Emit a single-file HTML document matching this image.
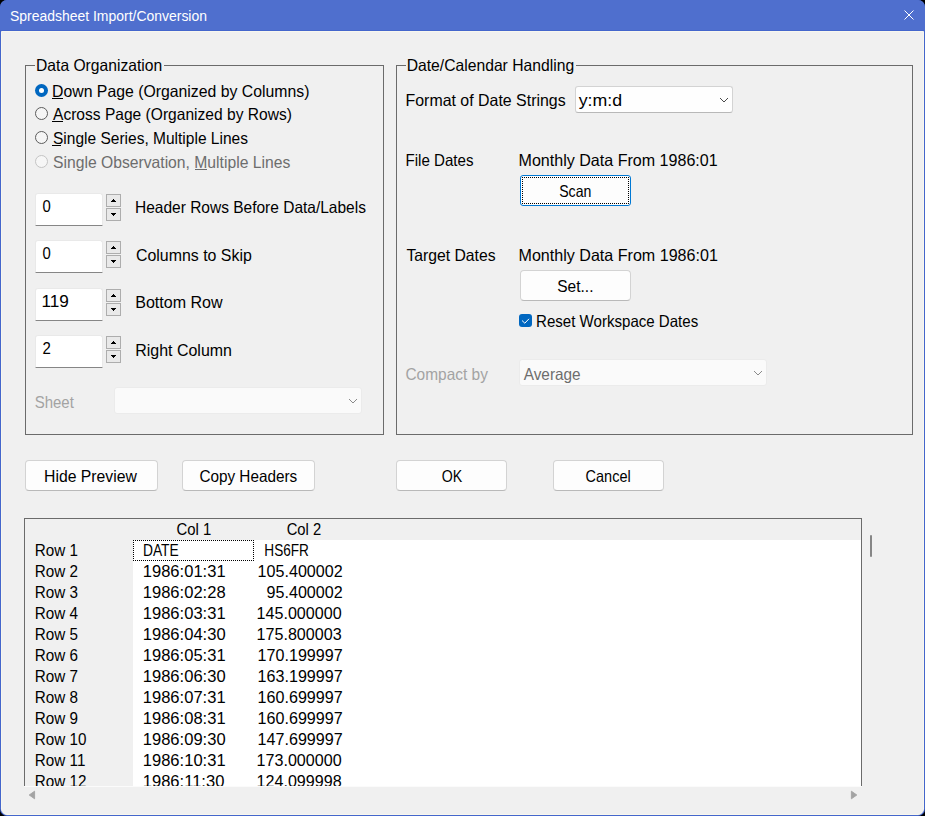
<!DOCTYPE html>
<html><head><meta charset="utf-8">
<style>
html,body{margin:0;padding:0;width:925px;height:816px;overflow:hidden;background:#000;}
*{box-sizing:border-box;}
.a{position:absolute;}
#win{position:absolute;left:0;top:0;width:925px;height:816px;border-radius:7px 7px 7px 7px;background:#4466cc;overflow:hidden;}
#title{position:absolute;left:0;top:0;width:925px;height:30px;background:#4f6fce;}
#client{position:absolute;left:1px;top:31px;width:923px;height:784px;background:#f0f0f0;border:1px solid #f8f7ee;border-radius:0 0 6px 6px;}
.grp{position:absolute;border:1px solid #6b6b6b;}
.gap{position:absolute;background:#f0f0f0;height:3px;}
.radio{position:absolute;width:13px;height:13px;border-radius:50%;border:1px solid #5c5c5c;background:#f5f5f5;}
.radio.on{border:none;background:#0067c0;}
.radio.on::after{content:"";position:absolute;left:4px;top:4px;width:5px;height:5px;border-radius:50%;background:#fff;}
.radio.dis{border-color:#c4c4c4;background:#f6f6f6;}
.edit{position:absolute;width:68px;height:33px;background:#fff;border:1px solid #e9e9e9;border-bottom:1px solid #868686;border-radius:3px 3px 0 0;}
.spin{position:absolute;width:15px;height:13px;border:1px solid #adadad;background:#e9e9e9;}
.combo{position:absolute;background:#fefefe;border:1px solid #d3d3d3;border-bottom-color:#b8b8b8;border-radius:3px;}
.combo.dis{background:#fafafa;border-color:#ebebeb;}
.btn{position:absolute;background:#fdfdfd;border:1px solid #d3d3d3;border-bottom-color:#b9b9b9;border-radius:4px;}
svg.ov{position:absolute;left:0;top:0;}
svg.ov text{font-family:"Liberation Sans",sans-serif;}
</style></head><body>
<div id="win">
  <div id="title"></div>
  <div id="client"></div>

  <!-- Left group -->
  <div class="grp" style="left:25px;top:65px;width:359px;height:370px;"></div>
  <div class="gap" style="left:35px;top:64px;width:129px;"></div>

  <div class="radio on" style="left:35px;top:84px;"></div>
  <div class="radio" style="left:35px;top:107px;"></div>
  <div class="radio" style="left:35px;top:131px;"></div>
  <div class="radio dis" style="left:35px;top:155px;"></div>

  <div class="edit" style="left:35px;top:193px;"></div>
  <div class="spin up" style="left:106px;top:194px;"></div>
  <div class="spin dn" style="left:106px;top:208px;"></div>
  <div class="edit" style="left:35px;top:240px;"></div>
  <div class="spin up" style="left:106px;top:241px;"></div>
  <div class="spin dn" style="left:106px;top:255px;"></div>
  <div class="edit" style="left:35px;top:288px;"></div>
  <div class="spin up" style="left:106px;top:289px;"></div>
  <div class="spin dn" style="left:106px;top:303px;"></div>
  <div class="edit" style="left:35px;top:335px;"></div>
  <div class="spin up" style="left:106px;top:336px;"></div>
  <div class="spin dn" style="left:106px;top:350px;"></div>

  <div class="combo dis" style="left:114px;top:387px;width:248px;height:27px;"></div>

  <!-- Right group -->
  <div class="grp" style="left:396px;top:65px;width:517px;height:370px;"></div>
  <div class="gap" style="left:406px;top:64px;width:170px;"></div>
  <div class="combo" style="left:575px;top:86px;width:158px;height:27px;"></div>
  <div class="btn" style="left:520px;top:175px;width:111px;height:31px;border-color:#0078d4;border-radius:3px;"></div>
  <div class="btn" style="left:520px;top:270px;width:111px;height:31px;"></div>
  <div class="a" style="left:519px;top:314px;width:13px;height:13px;background:#0067c0;border-radius:3px;"></div>
  <div class="combo dis" style="left:519px;top:359px;width:248px;height:27px;"></div>

  <!-- buttons -->
  <div class="btn" style="left:25px;top:460px;width:133px;height:31px;"></div>
  <div class="btn" style="left:182px;top:460px;width:133px;height:31px;"></div>
  <div class="btn" style="left:396px;top:460px;width:111px;height:31px;"></div>
  <div class="btn" style="left:553px;top:460px;width:111px;height:31px;"></div>

  <!-- preview -->
  <div class="a" style="left:24px;top:518px;width:838px;height:268px;border:1px solid #6b6b6b;border-bottom:none;background:#f0f0f0;"></div>
  <div class="a" style="left:133px;top:540px;width:728px;height:246px;background:#fff;"></div>
  <div class="a" style="left:24px;top:786px;width:838px;height:1px;background:#fbfbfb;"></div>
  <div class="a" style="left:870px;top:535px;width:2px;height:22px;background:#868686;border-radius:1px;"></div>

  <svg class="ov" width="925" height="816" viewBox="0 0 925 816">
    <!-- close X -->
    <path d="M904.5 10.5L913.5 19.5M913.5 10.5L904.5 19.5" stroke="#fff" stroke-width="1" fill="none"/>
    <!-- combo chevrons -->
    <path d="M720 98h1v1h-1zM721 99h1v1h-1zM722 100h1v1h-1zM723 101h2v1h-2zM725 100h1v1h-1zM726 99h1v1h-1zM727 98h1v1h-1z" fill="#4a4a4a"/>
    <path d="M349 399h1v1h-1zM350 400h1v1h-1zM351 401h1v1h-1zM352 402h2v1h-2zM354 401h1v1h-1zM355 400h1v1h-1zM356 399h1v1h-1z" fill="#8a8a8a"/>
    <path d="M754 371h1v1h-1zM755 372h1v1h-1zM756 373h1v1h-1zM757 374h2v1h-2zM759 373h1v1h-1zM760 372h1v1h-1zM761 371h1v1h-1z" fill="#8a8a8a"/>
    <!-- checkbox tick -->
    <path d="M522 320.5L524.8 323.2L529 318.8" stroke="#fff" stroke-width="1" fill="none"/>
    <!-- underlines -->
    <rect x="52" y="98" width="11" height="1" fill="#000"/>
    <rect x="52" y="121" width="11" height="1" fill="#000"/>
    <rect x="52" y="145" width="9" height="1" fill="#000"/>
    <rect x="195" y="169" width="12" height="1" fill="#6d6d6d"/>
    <!-- h scroll arrows -->
    <path d="M29.2 795L34.6 791.2L34.6 798.8Z" fill="#a3a3a3" stroke="#a3a3a3" stroke-width="0.9" stroke-linejoin="round"/>
    <path d="M856.8 795L851.4 791.2L851.4 798.8Z" fill="#a3a3a3" stroke="#a3a3a3" stroke-width="0.9" stroke-linejoin="round"/>
<text x="10.00" y="21.00" font-size="14" fill="#fff" textLength="196.98" lengthAdjust="spacingAndGlyphs">Spreadsheet Import/Conversion</text>
<text x="36.05" y="71.00" font-size="16.5" fill="#000" textLength="126.12" lengthAdjust="spacingAndGlyphs">Data Organization</text>
<text x="52.04" y="97.00" font-size="16.5" fill="#000" textLength="257.43" lengthAdjust="spacingAndGlyphs">Down Page (Organized by Columns)</text>
<text x="53.00" y="120.00" font-size="16.5" fill="#000" textLength="238.87" lengthAdjust="spacingAndGlyphs">Across Page (Organized by Rows)</text>
<text x="53.00" y="144.00" font-size="16.5" fill="#000" textLength="194.94" lengthAdjust="spacingAndGlyphs">Single Series, Multiple Lines</text>
<text x="53.00" y="167.60" font-size="16.5" fill="#6d6d6d" textLength="237.24" lengthAdjust="spacingAndGlyphs">Single Observation, Multiple Lines</text>
<text x="42.50" y="212.00" font-size="16.5" fill="#000" textLength="8.26" lengthAdjust="spacingAndGlyphs">0</text>
<text x="42.50" y="259.00" font-size="16.5" fill="#000" textLength="8.26" lengthAdjust="spacingAndGlyphs">0</text>
<text x="41.46" y="307.00" font-size="16.5" fill="#000" textLength="27.43" lengthAdjust="spacingAndGlyphs">119</text>
<text x="42.50" y="354.00" font-size="16.5" fill="#000" textLength="8.36" lengthAdjust="spacingAndGlyphs">2</text>
<text x="135.06" y="213.00" font-size="16.5" fill="#000" textLength="230.87" lengthAdjust="spacingAndGlyphs">Header Rows Before Data/Labels</text>
<text x="136.00" y="261.00" font-size="16.5" fill="#000" textLength="115.77" lengthAdjust="spacingAndGlyphs">Columns to Skip</text>
<text x="135.23" y="308.00" font-size="16.5" fill="#000" textLength="87.39" lengthAdjust="spacingAndGlyphs">Bottom Row</text>
<text x="135.23" y="355.70" font-size="16.5" fill="#000" textLength="96.74" lengthAdjust="spacingAndGlyphs">Right Column</text>
<text x="34.70" y="408.00" font-size="16.5" fill="#a3a3a3" textLength="39.12" lengthAdjust="spacingAndGlyphs">Sheet</text>
<text x="406.65" y="71.20" font-size="16.5" fill="#000" textLength="167.52" lengthAdjust="spacingAndGlyphs">Date/Calendar Handling</text>
<text x="405.54" y="105.80" font-size="16.5" fill="#000" textLength="160.11" lengthAdjust="spacingAndGlyphs">Format of Date Strings</text>
<text x="578.70" y="105.50" font-size="16.5" fill="#000" textLength="43.39" lengthAdjust="spacingAndGlyphs">y:m:d</text>
<text x="405.48" y="165.70" font-size="16.5" fill="#000" textLength="68.05" lengthAdjust="spacingAndGlyphs">File Dates</text>
<text x="518.53" y="165.50" font-size="16.5" fill="#000" textLength="199.15" lengthAdjust="spacingAndGlyphs">Monthly Data From 1986:01</text>
<text x="559.20" y="196.70" font-size="16.5" fill="#000" textLength="32.15" lengthAdjust="spacingAndGlyphs">Scan</text>
<text x="406.40" y="260.50" font-size="16.5" fill="#000" textLength="89.14" lengthAdjust="spacingAndGlyphs">Target Dates</text>
<text x="518.53" y="260.60" font-size="16.5" fill="#000" textLength="199.35" lengthAdjust="spacingAndGlyphs">Monthly Data From 1986:01</text>
<text x="557.30" y="292.00" font-size="16.5" fill="#000" textLength="36.15" lengthAdjust="spacingAndGlyphs">Set...</text>
<text x="536.09" y="327.00" font-size="16.5" fill="#000" textLength="162.14" lengthAdjust="spacingAndGlyphs">Reset Workspace Dates</text>
<text x="405.40" y="380.00" font-size="16.5" fill="#a3a3a3" textLength="82.50" lengthAdjust="spacingAndGlyphs">Compact by</text>
<text x="523.70" y="380.00" font-size="16.5" fill="#6d6d6d" textLength="56.96" lengthAdjust="spacingAndGlyphs">Average</text>
<text x="44.04" y="481.80" font-size="16.5" fill="#000" textLength="92.87" lengthAdjust="spacingAndGlyphs">Hide Preview</text>
<text x="199.40" y="482.00" font-size="16.5" fill="#000" textLength="97.83" lengthAdjust="spacingAndGlyphs">Copy Headers</text>
<text x="441.70" y="481.90" font-size="16.5" fill="#000" textLength="20.50" lengthAdjust="spacingAndGlyphs">OK</text>
<text x="585.60" y="482.00" font-size="16.5" fill="#000" textLength="45.08" lengthAdjust="spacingAndGlyphs">Cancel</text>
<text x="176.40" y="535.00" font-size="15.75" fill="#000" textLength="34.82" lengthAdjust="spacingAndGlyphs">Col 1</text>
<text x="286.70" y="535.00" font-size="15.75" fill="#000" textLength="34.51" lengthAdjust="spacingAndGlyphs">Col 2</text>
<path d="M522 177h1v1h-1zM522 179h1v1h-1zM522 181h1v1h-1zM522 183h1v1h-1zM522 185h1v1h-1zM522 187h1v1h-1zM522 189h1v1h-1zM522 191h1v1h-1zM522 193h1v1h-1zM522 195h1v1h-1zM522 197h1v1h-1zM522 199h1v1h-1zM522 201h1v1h-1zM522 203h1v1h-1zM524 177h1v1h-1zM524 203h1v1h-1zM526 177h1v1h-1zM526 203h1v1h-1zM528 177h1v1h-1zM528 203h1v1h-1zM530 177h1v1h-1zM530 203h1v1h-1zM532 177h1v1h-1zM532 203h1v1h-1zM534 177h1v1h-1zM534 203h1v1h-1zM536 177h1v1h-1zM536 203h1v1h-1zM538 177h1v1h-1zM538 203h1v1h-1zM540 177h1v1h-1zM540 203h1v1h-1zM542 177h1v1h-1zM542 203h1v1h-1zM544 177h1v1h-1zM544 203h1v1h-1zM546 177h1v1h-1zM546 203h1v1h-1zM548 177h1v1h-1zM548 203h1v1h-1zM550 177h1v1h-1zM550 203h1v1h-1zM552 177h1v1h-1zM552 203h1v1h-1zM554 177h1v1h-1zM554 203h1v1h-1zM556 177h1v1h-1zM556 203h1v1h-1zM558 177h1v1h-1zM558 203h1v1h-1zM560 177h1v1h-1zM560 203h1v1h-1zM562 177h1v1h-1zM562 203h1v1h-1zM564 177h1v1h-1zM564 203h1v1h-1zM566 177h1v1h-1zM566 203h1v1h-1zM568 177h1v1h-1zM568 203h1v1h-1zM570 177h1v1h-1zM570 203h1v1h-1zM572 177h1v1h-1zM572 203h1v1h-1zM574 177h1v1h-1zM574 203h1v1h-1zM576 177h1v1h-1zM576 203h1v1h-1zM578 177h1v1h-1zM578 203h1v1h-1zM580 177h1v1h-1zM580 203h1v1h-1zM582 177h1v1h-1zM582 203h1v1h-1zM584 177h1v1h-1zM584 203h1v1h-1zM586 177h1v1h-1zM586 203h1v1h-1zM588 177h1v1h-1zM588 203h1v1h-1zM590 177h1v1h-1zM590 203h1v1h-1zM592 177h1v1h-1zM592 203h1v1h-1zM594 177h1v1h-1zM594 203h1v1h-1zM596 177h1v1h-1zM596 203h1v1h-1zM598 177h1v1h-1zM598 203h1v1h-1zM600 177h1v1h-1zM600 203h1v1h-1zM602 177h1v1h-1zM602 203h1v1h-1zM604 177h1v1h-1zM604 203h1v1h-1zM606 177h1v1h-1zM606 203h1v1h-1zM608 177h1v1h-1zM608 203h1v1h-1zM610 177h1v1h-1zM610 203h1v1h-1zM612 177h1v1h-1zM612 203h1v1h-1zM614 177h1v1h-1zM614 203h1v1h-1zM616 177h1v1h-1zM616 203h1v1h-1zM618 177h1v1h-1zM618 203h1v1h-1zM620 177h1v1h-1zM620 203h1v1h-1zM622 177h1v1h-1zM622 203h1v1h-1zM624 177h1v1h-1zM624 203h1v1h-1zM626 177h1v1h-1zM626 203h1v1h-1zM628 177h1v1h-1zM628 179h1v1h-1zM628 181h1v1h-1zM628 183h1v1h-1zM628 185h1v1h-1zM628 187h1v1h-1zM628 189h1v1h-1zM628 191h1v1h-1zM628 193h1v1h-1zM628 195h1v1h-1zM628 197h1v1h-1zM628 199h1v1h-1zM628 201h1v1h-1zM628 203h1v1h-1z" fill="#000"/>
<path d="M133 540h1v1h-1zM133 542h1v1h-1zM133 544h1v1h-1zM133 546h1v1h-1zM133 548h1v1h-1zM133 550h1v1h-1zM133 552h1v1h-1zM133 554h1v1h-1zM133 556h1v1h-1zM133 558h1v1h-1zM133 560h1v1h-1zM135 540h1v1h-1zM135 560h1v1h-1zM137 540h1v1h-1zM137 560h1v1h-1zM139 540h1v1h-1zM139 560h1v1h-1zM141 540h1v1h-1zM141 560h1v1h-1zM143 540h1v1h-1zM143 560h1v1h-1zM145 540h1v1h-1zM145 560h1v1h-1zM147 540h1v1h-1zM147 560h1v1h-1zM149 540h1v1h-1zM149 560h1v1h-1zM151 540h1v1h-1zM151 560h1v1h-1zM153 540h1v1h-1zM153 560h1v1h-1zM155 540h1v1h-1zM155 560h1v1h-1zM157 540h1v1h-1zM157 560h1v1h-1zM159 540h1v1h-1zM159 560h1v1h-1zM161 540h1v1h-1zM161 560h1v1h-1zM163 540h1v1h-1zM163 560h1v1h-1zM165 540h1v1h-1zM165 560h1v1h-1zM167 540h1v1h-1zM167 560h1v1h-1zM169 540h1v1h-1zM169 560h1v1h-1zM171 540h1v1h-1zM171 560h1v1h-1zM173 540h1v1h-1zM173 560h1v1h-1zM175 540h1v1h-1zM175 560h1v1h-1zM177 540h1v1h-1zM177 560h1v1h-1zM179 540h1v1h-1zM179 560h1v1h-1zM181 540h1v1h-1zM181 560h1v1h-1zM183 540h1v1h-1zM183 560h1v1h-1zM185 540h1v1h-1zM185 560h1v1h-1zM187 540h1v1h-1zM187 560h1v1h-1zM189 540h1v1h-1zM189 560h1v1h-1zM191 540h1v1h-1zM191 560h1v1h-1zM193 540h1v1h-1zM193 560h1v1h-1zM195 540h1v1h-1zM195 560h1v1h-1zM197 540h1v1h-1zM197 560h1v1h-1zM199 540h1v1h-1zM199 560h1v1h-1zM201 540h1v1h-1zM201 560h1v1h-1zM203 540h1v1h-1zM203 560h1v1h-1zM205 540h1v1h-1zM205 560h1v1h-1zM207 540h1v1h-1zM207 560h1v1h-1zM209 540h1v1h-1zM209 560h1v1h-1zM211 540h1v1h-1zM211 560h1v1h-1zM213 540h1v1h-1zM213 560h1v1h-1zM215 540h1v1h-1zM215 560h1v1h-1zM217 540h1v1h-1zM217 560h1v1h-1zM219 540h1v1h-1zM219 560h1v1h-1zM221 540h1v1h-1zM221 560h1v1h-1zM223 540h1v1h-1zM223 560h1v1h-1zM225 540h1v1h-1zM225 560h1v1h-1zM227 540h1v1h-1zM227 560h1v1h-1zM229 540h1v1h-1zM229 560h1v1h-1zM231 540h1v1h-1zM231 560h1v1h-1zM233 540h1v1h-1zM233 560h1v1h-1zM235 540h1v1h-1zM235 560h1v1h-1zM237 540h1v1h-1zM237 560h1v1h-1zM239 540h1v1h-1zM239 560h1v1h-1zM241 540h1v1h-1zM241 560h1v1h-1zM243 540h1v1h-1zM243 560h1v1h-1zM245 540h1v1h-1zM245 560h1v1h-1zM247 540h1v1h-1zM247 560h1v1h-1zM249 540h1v1h-1zM249 560h1v1h-1zM251 540h1v1h-1zM251 560h1v1h-1zM253 540h1v1h-1zM253 542h1v1h-1zM253 544h1v1h-1zM253 546h1v1h-1zM253 548h1v1h-1zM253 550h1v1h-1zM253 552h1v1h-1zM253 554h1v1h-1zM253 556h1v1h-1zM253 558h1v1h-1zM253 560h1v1h-1z" fill="#000"/>
<path d="M113 199h1v1h-1zM112 200h3v1h-3zM111 201h5v1h-5zM111 213h5v1h-5zM112 214h3v1h-3zM113 215h1v1h-1zM113 246h1v1h-1zM112 247h3v1h-3zM111 248h5v1h-5zM111 260h5v1h-5zM112 261h3v1h-3zM113 262h1v1h-1zM113 294h1v1h-1zM112 295h3v1h-3zM111 296h5v1h-5zM111 308h5v1h-5zM112 309h3v1h-3zM113 310h1v1h-1zM113 341h1v1h-1zM112 342h3v1h-3zM111 343h5v1h-5zM111 355h5v1h-5zM112 356h3v1h-3zM113 357h1v1h-1z" fill="#000"/>
    <defs><clipPath id="gc"><rect x="25" y="519" width="836" height="267"/></clipPath></defs>
    <g clip-path="url(#gc)">
<text x="34.83" y="556.00" font-size="15.75" fill="#000" textLength="43.20" lengthAdjust="spacingAndGlyphs">Row 1</text>
<text x="142.92" y="556.00" font-size="15.75" fill="#000" textLength="35.82" lengthAdjust="spacingAndGlyphs">DATE</text>
<text x="264.34" y="556.00" font-size="15.75" fill="#000" textLength="44.59" lengthAdjust="spacingAndGlyphs">HS6FR</text>
<text x="34.83" y="577.00" font-size="15.75" fill="#000" textLength="43.20" lengthAdjust="spacingAndGlyphs">Row 2</text>
<text x="142.75" y="577.00" font-size="15.75" fill="#000" textLength="82.85" lengthAdjust="spacingAndGlyphs">1986:01:31</text>
<text x="257.58" y="577.00" font-size="15.75" fill="#000" textLength="85.10" lengthAdjust="spacingAndGlyphs">105.400002</text>
<text x="34.83" y="598.00" font-size="15.75" fill="#000" textLength="43.20" lengthAdjust="spacingAndGlyphs">Row 3</text>
<text x="142.75" y="598.00" font-size="15.75" fill="#000" textLength="82.85" lengthAdjust="spacingAndGlyphs">1986:02:28</text>
<text x="266.54" y="598.00" font-size="15.75" fill="#000" textLength="76.14" lengthAdjust="spacingAndGlyphs">95.400002</text>
<text x="34.83" y="619.00" font-size="15.75" fill="#000" textLength="43.20" lengthAdjust="spacingAndGlyphs">Row 4</text>
<text x="142.75" y="619.00" font-size="15.75" fill="#000" textLength="82.85" lengthAdjust="spacingAndGlyphs">1986:03:31</text>
<text x="256.55" y="619.00" font-size="15.75" fill="#000" textLength="85.10" lengthAdjust="spacingAndGlyphs">145.000000</text>
<text x="34.83" y="640.00" font-size="15.75" fill="#000" textLength="43.20" lengthAdjust="spacingAndGlyphs">Row 5</text>
<text x="142.75" y="640.00" font-size="15.75" fill="#000" textLength="82.85" lengthAdjust="spacingAndGlyphs">1986:04:30</text>
<text x="256.55" y="640.00" font-size="15.75" fill="#000" textLength="85.10" lengthAdjust="spacingAndGlyphs">175.800003</text>
<text x="34.83" y="661.00" font-size="15.75" fill="#000" textLength="43.20" lengthAdjust="spacingAndGlyphs">Row 6</text>
<text x="142.75" y="661.00" font-size="15.75" fill="#000" textLength="82.85" lengthAdjust="spacingAndGlyphs">1986:05:31</text>
<text x="257.58" y="661.00" font-size="15.75" fill="#000" textLength="85.10" lengthAdjust="spacingAndGlyphs">170.199997</text>
<text x="34.83" y="682.00" font-size="15.75" fill="#000" textLength="43.20" lengthAdjust="spacingAndGlyphs">Row 7</text>
<text x="142.75" y="682.00" font-size="15.75" fill="#000" textLength="82.85" lengthAdjust="spacingAndGlyphs">1986:06:30</text>
<text x="257.58" y="682.00" font-size="15.75" fill="#000" textLength="85.10" lengthAdjust="spacingAndGlyphs">163.199997</text>
<text x="34.83" y="703.00" font-size="15.75" fill="#000" textLength="43.20" lengthAdjust="spacingAndGlyphs">Row 8</text>
<text x="142.75" y="703.00" font-size="15.75" fill="#000" textLength="82.85" lengthAdjust="spacingAndGlyphs">1986:07:31</text>
<text x="257.58" y="703.00" font-size="15.75" fill="#000" textLength="85.10" lengthAdjust="spacingAndGlyphs">160.699997</text>
<text x="34.83" y="724.00" font-size="15.75" fill="#000" textLength="43.20" lengthAdjust="spacingAndGlyphs">Row 9</text>
<text x="142.75" y="724.00" font-size="15.75" fill="#000" textLength="82.85" lengthAdjust="spacingAndGlyphs">1986:08:31</text>
<text x="257.58" y="724.00" font-size="15.75" fill="#000" textLength="85.10" lengthAdjust="spacingAndGlyphs">160.699997</text>
<text x="34.83" y="745.00" font-size="15.75" fill="#000" textLength="51.68" lengthAdjust="spacingAndGlyphs">Row 10</text>
<text x="142.75" y="745.00" font-size="15.75" fill="#000" textLength="82.85" lengthAdjust="spacingAndGlyphs">1986:09:30</text>
<text x="257.58" y="745.00" font-size="15.75" fill="#000" textLength="85.10" lengthAdjust="spacingAndGlyphs">147.699997</text>
<text x="34.83" y="766.00" font-size="15.75" fill="#000" textLength="50.55" lengthAdjust="spacingAndGlyphs">Row 11</text>
<text x="142.75" y="766.00" font-size="15.75" fill="#000" textLength="82.85" lengthAdjust="spacingAndGlyphs">1986:10:31</text>
<text x="256.55" y="766.00" font-size="15.75" fill="#000" textLength="85.10" lengthAdjust="spacingAndGlyphs">173.000000</text>
<text x="34.83" y="787.00" font-size="15.75" fill="#000" textLength="51.68" lengthAdjust="spacingAndGlyphs">Row 12</text>
<text x="142.75" y="787.00" font-size="15.75" fill="#000" textLength="81.62" lengthAdjust="spacingAndGlyphs">1986:11:30</text>
<text x="256.55" y="787.00" font-size="15.75" fill="#000" textLength="85.10" lengthAdjust="spacingAndGlyphs">124.099998</text>
    </g>
  </svg>
</div>
</body></html>
